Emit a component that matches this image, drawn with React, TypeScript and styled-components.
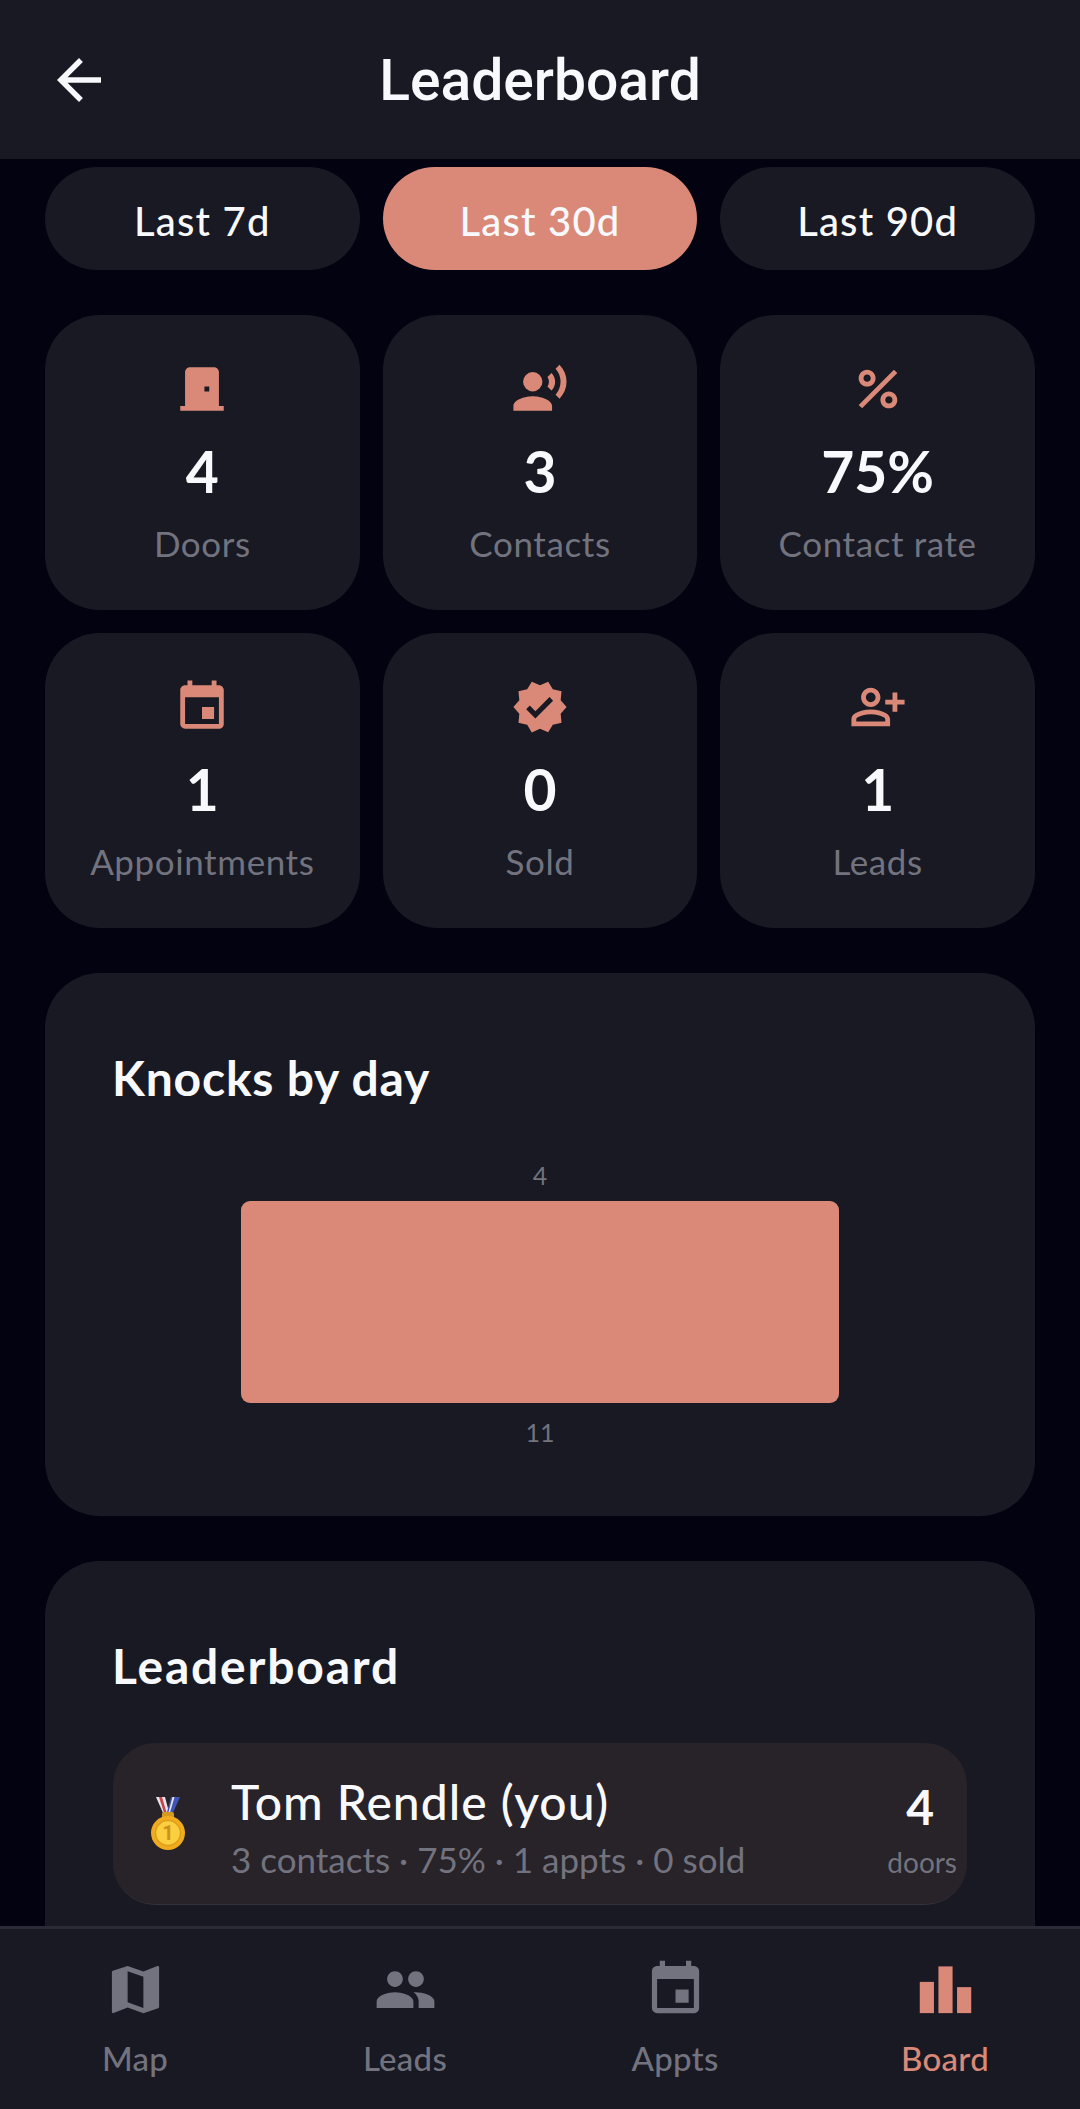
import { createGlobalStyle, styled } from 'styled-components';
import {
  MdArrowBack,
  MdDoorFront,
  MdEvent,
  MdMap,
  MdOutlinePersonAddAlt,
  MdPeople,
  MdPercent,
  MdRecordVoiceOver,
  MdVerified,
} from 'react-icons/md';

const ACCENT = '#da8978';
const CARD = '#181922';
const MUTED = '#72737f';
const TEXT = '#f8f9fc';
const FONT = '"Lato", "Open Sans", sans-serif';

const GlobalStyle = createGlobalStyle`
  html, body {
    margin: 0;
    padding: 0;
    background: #020210;
  }
  * {
    box-sizing: border-box;
  }
`;

const Screen = styled.div`
  width: 1080px;
  height: 2109px;
  display: flex;
  flex-direction: column;
  overflow: hidden;
  background: #020210;
  color: ${TEXT};
  font-family: ${FONT};
`;

const Header = styled.header`
  height: 159px;
  flex: none;
  display: flex;
  align-items: center;
  justify-content: center;
  position: relative;
  background: ${CARD};
`;

const BackButton = styled.button`
  position: absolute;
  left: 46px;
  top: 47px;
  width: 66px;
  height: 66px;
  padding: 0;
  border: none;
  background: transparent;
  color: ${TEXT};
  font-size: 66px;
  line-height: 0;
`;

const Title = styled.h1`
  margin: 2px 0 0;
  font-family: 'Roboto', sans-serif;
  font-size: 57px;
  font-weight: 500;
  color: ${TEXT};
`;

const Content = styled.main`
  flex: 1;
  min-height: 0;
  overflow: hidden;
  padding: 8px 45px 0;
  display: flex;
  flex-direction: column;
`;

const RangeRow = styled.div`
  display: grid;
  grid-template-columns: repeat(3, 1fr);
  gap: 23px;
  margin-bottom: 45px;
`;

const RangeChip = styled.button<{ $active?: boolean }>`
  height: 103px;
  padding: 5px 0 0;
  border: none;
  border-radius: 52px;
  background: ${(p) => (p.$active ? ACCENT : CARD)};
  color: ${TEXT};
  font-family: ${FONT};
  font-size: 40px;
  font-weight: 500;
  letter-spacing: 1.2px;
`;

const StatGrid = styled.div`
  display: grid;
  grid-template-columns: repeat(3, 1fr);
  gap: 23px;
  margin-bottom: 45px;
`;

const StatCard = styled.div`
  height: 295px;
  border-radius: 55px;
  background: ${CARD};
  display: flex;
  flex-direction: column;
  align-items: center;
  padding-top: 25px;
`;

const StatIcon = styled.div`
  height: 58px;
  margin-top: 20px;
  color: ${ACCENT};
  font-size: 58px;
  line-height: 0;
`;

const StatValue = styled.div`
  margin-top: 18px;
  height: 70px;
  line-height: 70px;
  font-size: 57px;
  font-weight: 700;
`;

const StatLabel = styled.div`
  margin-top: 15px;
  height: 44px;
  line-height: 44px;
  font-size: 35px;
  letter-spacing: 0.6px;
  color: ${MUTED};
`;

const Panel = styled.section`
  flex: none;
  padding: 78px 68px 0;
  border-radius: 55px;
  background: ${CARD};
  margin-bottom: 45px;
`;

const ChartPanel = styled(Panel)`
  height: 543px;
`;

const BoardPanel = styled(Panel)`
  min-height: 520px;
  margin-bottom: 0;
`;

const PanelTitle = styled.h2<{ $spacing?: number }>`
  margin: 0 0 0 -1px;
  height: 54px;
  line-height: 54px;
  font-size: 48px;
  font-weight: 700;
  letter-spacing: ${(p) => p.$spacing ?? 0.8}px;
`;

const Chart = styled.div`
  margin-top: 55px;
  display: flex;
  flex-direction: column;
  align-items: center;
`;

const ChartValue = styled.div`
  height: 30px;
  line-height: 30px;
  font-size: 25px;
  color: ${MUTED};
`;

const ChartBar = styled.div`
  width: 598px;
  margin: 11px 0 14px;
  border-radius: 9px;
  background: ${ACCENT};
`;

const RepRow = styled.div`
  margin-top: 50px;
  height: 162px;
  border-radius: 42px;
  border-bottom: 1px solid #35313a;
  background: #282229;
  display: flex;
  align-items: center;
  padding: 0 10px 0 37px;
`;

const RepInfo = styled.div`
  margin-left: 45px;
  flex: 1;
`;

const RepName = styled.div`
  margin-top: 9px;
  height: 52px;
  line-height: 52px;
  font-size: 48px;
  font-weight: 500;
  letter-spacing: 1px;
`;

const RepMeta = styled.div`
  margin-top: 10px;
  height: 42px;
  line-height: 42px;
  font-size: 35px;
  color: ${MUTED};
`;

const RepScore = styled.div`
  display: flex;
  flex-direction: column;
  align-items: flex-end;
`;

const ScoreValue = styled.div`
  height: 52px;
  margin: 15px 23px 0 0;
  line-height: 52px;
  font-size: 48px;
  font-weight: 700;
`;

const ScoreUnit = styled.div`
  margin-top: 10px;
  height: 38px;
  line-height: 38px;
  font-size: 28px;
  color: ${MUTED};
`;

const BottomNav = styled.nav`
  height: 183px;
  flex: none;
  display: grid;
  grid-template-columns: repeat(4, 1fr);
  border-top: 3px solid #2a2b36;
  background: ${CARD};
`;

const NavItem = styled.div<{ $active?: boolean }>`
  display: flex;
  flex-direction: column;
  align-items: center;
  padding-top: 29px;
  color: ${(p) => (p.$active ? ACCENT : MUTED)};
`;

const NavIcon = styled.div`
  height: 63px;
  font-size: 63px;
  line-height: 0;
`;

const NavLabel = styled.div`
  margin-top: 16px;
  height: 42px;
  line-height: 42px;
  font-size: 33px;
  font-weight: 500;
  letter-spacing: 0.3px;
`;

const BoardIcon = () => (
  <svg width="1em" height="1em" viewBox="0 0 24 24" fill="currentColor">
    <rect x="2.2" y="9.1" width="5.4" height="11.9" />
    <rect x="9.3" y="3.2" width="5.4" height="17.8" />
    <rect x="16.4" y="11.1" width="5.4" height="9.9" />
  </svg>
);

const Medal = () => (
  <svg width="36" height="54" viewBox="0 0 36 54">
    <path d="M6 0h9l4.5 17h-6z" fill="#e4e5ee" />
    <path d="M9 0h3l5 17h-2.6z" fill="#c9434b" />
    <path d="M30 0h-9l-4.5 17h6z" fill="#3f55b5" />
    <path d="M24.5 0h-2L18 17h1.6z" fill="#e4e5ee" />
    <rect x="12" y="15" width="12" height="8" rx="2" fill="#d49a1e" />
    <circle cx="18" cy="36" r="17" fill="#f0ab1e" />
    <circle cx="18" cy="36" r="12.5" fill="#fbcf3f" stroke="#dd9f1e" strokeWidth="1.5" />
    <text x="18" y="43" textAnchor="middle" fontSize="20" fontWeight="700" fontFamily="Roboto, sans-serif" fill="#cf8f1c">
      1
    </text>
  </svg>
);

const ranges = [
  { label: 'Last 7d' },
  { label: 'Last 30d', active: true },
  { label: 'Last 90d' },
];

const stats = [
  { icon: <MdDoorFront />, value: '4', label: 'Doors' },
  { icon: <MdRecordVoiceOver />, value: '3', label: 'Contacts' },
  { icon: <MdPercent />, value: '75%', label: 'Contact rate' },
  { icon: <MdEvent />, value: '1', label: 'Appointments' },
  { icon: <MdVerified />, value: '0', label: 'Sold' },
  { icon: <MdOutlinePersonAddAlt />, value: '1', label: 'Leads' },
];

const navItems = [
  { icon: <MdMap />, label: 'Map' },
  { icon: <MdPeople />, label: 'Leads' },
  { icon: <MdEvent />, label: 'Appts' },
  { icon: <BoardIcon />, label: 'Board', active: true },
];

export default function App() {
  return (
    <>
      <GlobalStyle />
      <Screen>
        <Header>
          <BackButton aria-label="Back">
            <MdArrowBack />
          </BackButton>
          <Title>Leaderboard</Title>
        </Header>
        <Content>
          <RangeRow>
            {ranges.map((r) => (
              <RangeChip key={r.label} $active={r.active}>
                {r.label}
              </RangeChip>
            ))}
          </RangeRow>
          <StatGrid>
            {stats.map((s) => (
              <StatCard key={s.label}>
                <StatIcon>{s.icon}</StatIcon>
                <StatValue>{s.value}</StatValue>
                <StatLabel>{s.label}</StatLabel>
              </StatCard>
            ))}
          </StatGrid>
          <ChartPanel>
            <PanelTitle>Knocks by day</PanelTitle>
            <Chart>
              <ChartValue>4</ChartValue>
              <ChartBar style={{ height: 202 }} />
              <ChartValue>11</ChartValue>
            </Chart>
          </ChartPanel>
          <BoardPanel>
            <PanelTitle $spacing={1.8}>Leaderboard</PanelTitle>
            <RepRow>
              <Medal />
              <RepInfo>
                <RepName>Tom Rendle (you)</RepName>
                <RepMeta>3 contacts · 75% · 1 appts · 0 sold</RepMeta>
              </RepInfo>
              <RepScore>
                <ScoreValue>4</ScoreValue>
                <ScoreUnit>doors</ScoreUnit>
              </RepScore>
            </RepRow>
          </BoardPanel>
        </Content>
        <BottomNav>
          {navItems.map((n) => (
            <NavItem key={n.label} $active={n.active}>
              <NavIcon>{n.icon}</NavIcon>
              <NavLabel>{n.label}</NavLabel>
            </NavItem>
          ))}
        </BottomNav>
      </Screen>
    </>
  );
}
